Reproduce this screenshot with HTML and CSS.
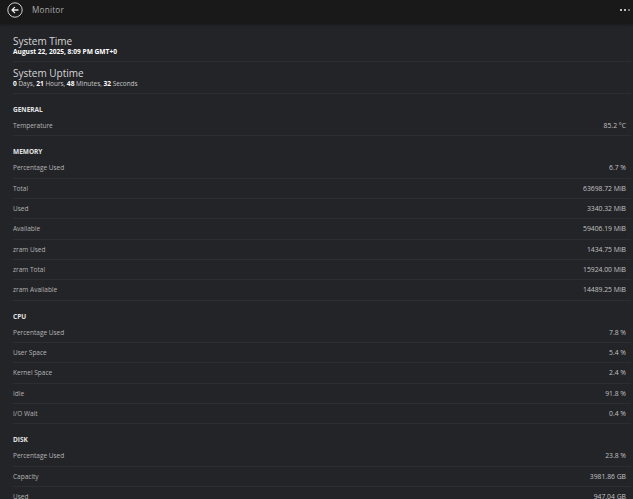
FILE: index.html
```html
<!DOCTYPE html>
<html>
<head>
<meta charset="utf-8">
<link rel="stylesheet" href="styles.css">
</head>
<body>
<header class="topbar">
  <div class="back">
    <svg width="16" height="16" viewBox="0 0 16 16"><circle cx="8" cy="8" r="7.2" fill="none" stroke="#cfcfcf" stroke-width="1"/><path d="M11 8H5.2M7.6 5.4L5 8l2.6 2.6" fill="none" stroke="#f0f0f0" stroke-width="1.3" stroke-linecap="round" stroke-linejoin="round"/></svg>
  </div>
  <div class="title">Monitor</div>
  <div class="dots"><span></span><span></span><span></span></div>
</header>
<main class="content">
  <section class="info first">
    <div class="info-title">System Time</div>
    <div class="info-sub"><b>August 22, 2025, 8:09 PM GMT+0</b></div>
  </section>
  <section class="info">
    <div class="info-title">System Uptime</div>
    <div class="info-sub"><b>0</b> Days, <b>21</b> Hours, <b>48</b> Minutes, <b>32</b> Seconds</div>
  </section>

  <div class="group-title">GENERAL</div>
  <div class="row"><span>Temperature</span><span>85.2 °C</span></div>

  <div class="group-title">MEMORY</div>
  <div class="row"><span>Percentage Used</span><span>6.7 %</span></div>
  <div class="row"><span>Total</span><span>63698.72 MiB</span></div>
  <div class="row"><span>Used</span><span>3340.32 MiB</span></div>
  <div class="row"><span>Available</span><span>59406.19 MiB</span></div>
  <div class="row"><span>zram Used</span><span>1434.75 MiB</span></div>
  <div class="row"><span>zram Total</span><span>15924.00 MiB</span></div>
  <div class="row"><span>zram Available</span><span>14489.25 MiB</span></div>

  <div class="group-title">CPU</div>
  <div class="row"><span>Percentage Used</span><span>7.8 %</span></div>
  <div class="row"><span>User Space</span><span>5.4 %</span></div>
  <div class="row"><span>Kernel Space</span><span>2.4 %</span></div>
  <div class="row"><span>Idle</span><span>91.8 %</span></div>
  <div class="row"><span>I/O Wait</span><span>0.4 %</span></div>

  <div class="group-title">DISK</div>
  <div class="row"><span>Percentage Used</span><span>23.8 %</span></div>
  <div class="row"><span>Capacity</span><span>3981.86 GB</span></div>
  <div class="row"><span>Used</span><span>947.04 GB</span></div>
  <div class="row"><span>Available</span><span>3034.82 GB</span></div>
</main>
</body>
</html>
```
FILE: styles.css
```css
html, body {
  margin: 0;
  padding: 0;
  background: #232428;
  height: 100%;
  overflow: hidden;
}
body {
  font-family: "Open Sans", "Liberation Sans", sans-serif;
  color: #b8b8b8;
}
.topbar {
  height: 24px;
  background: #191919;
  display: flex;
  align-items: center;
  padding: 0 0 5px 0;
  box-sizing: border-box;
  box-shadow: 0 1px 2px rgba(0,0,0,0.3);
}
.back {
  width: 16px;
  height: 16px;
  margin-left: 7px;
  display: flex;
}
.title {
  margin-left: 9px;
  font-size: 8.2px;
  color: #a9a9a9;
  letter-spacing: 0.2px;
}
.dots {
  margin-left: auto;
  margin-right: 3px;
  display: flex;
  gap: 2px;
}
.dots span {
  width: 2px;
  height: 2px;
  background: #bbbbbb;
}
.dots span:last-child { background: #777; }
.content {
  margin-left: 13px;
  margin-right: 2px;
}
.info {
  padding: 5px 0 5px 0;
  border-bottom: 1px solid #2d2e33;
}
.info.first { margin-top: 6px; }
.info-title {
  font-size: 10px;
  line-height: 12px;
  color: #d6d6d6;
}
.info-sub {
  font-size: 6.4px;
  line-height: 9px;
  color: #c8c8c8;
}
.info-sub b { color: #ffffff; font-weight: 700; font-size: 6.6px; }
.group-title {
  font-size: 6.5px;
  font-weight: 700;
  color: #e2e2e2;
  line-height: 10px;
  padding-top: 11px;
  height: 11px;
}
.row {
  height: 19.33px;
  border-bottom: 1px solid #2d2e33;
  display: flex;
  justify-content: space-between;
  align-items: center;
  padding-right: 5px;
  font-size: 6.5px;
  color: #b4b4b4;
}
.row span:last-child { color: #c2c2c2; font-size: 6.8px; }
```
